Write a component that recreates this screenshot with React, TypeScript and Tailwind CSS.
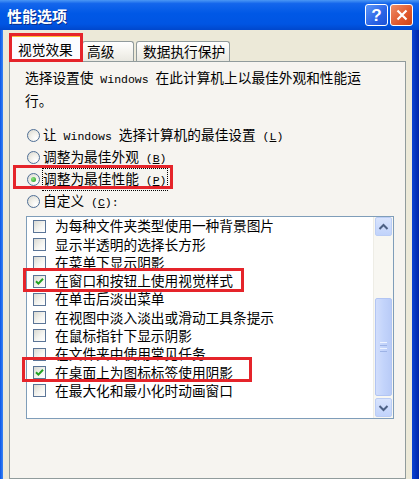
import React from "react";

const W = ({ children }: { children: React.ReactNode }) => (
  <span className="font-['Liberation_Mono',monospace] text-[11.5px]">{children}</span>
);

function Radio({ checked }: { checked?: boolean }) {
  return (
    <span className="w-[13px] h-[13px] rounded-full border border-[#4F6F96] bg-[radial-gradient(circle_at_70%_75%,#ffffff_0%,#f1f0ea_45%,#d6d5cd_100%)] shrink-0 flex items-center justify-center">
      {checked && (
        <span className="w-[5px] h-[5px] rounded-full bg-[radial-gradient(circle_at_35%_35%,#8ee27f,#1e9a1e)]" />
      )}
    </span>
  );
}

function Check({ checked }: { checked?: boolean }) {
  return (
    <span className="w-[13px] h-[13px] border border-[#5B7597] bg-[linear-gradient(135deg,#d9d9d2_0%,#f4f4f0_55%,#ffffff_100%)] shrink-0 flex items-center justify-center">
      {checked && (
        <svg width="9" height="9" viewBox="0 0 9 9">
          <path d="M1 4.2 L3.4 6.6 L8 1.8" stroke="#21A121" strokeWidth="2" fill="none" />
        </svg>
      )}
    </span>
  );
}

const items: { t: string; c?: boolean }[] = [
  { t: "为每种文件夹类型使用一种背景图片" },
  { t: "显示半透明的选择长方形" },
  { t: "在菜单下显示阴影" },
  { t: "在窗口和按钮上使用视觉样式", c: true },
  { t: "在单击后淡出菜单" },
  { t: "在视图中淡入淡出或滑动工具条提示" },
  { t: "在鼠标指针下显示阴影" },
  { t: "在文件夹中使用常见任务" },
  { t: "在桌面上为图标标签使用阴影", c: true },
  { t: "在最大化和最小化时动画窗口" },
];

function ScrollBtn({ up }: { up?: boolean }) {
  return (
    <div className="h-[19px] w-[17px] rounded-[2px] border border-[#BBCDF5] bg-[linear-gradient(to_bottom,#D9E4FD,#C1D3FB)] flex items-center justify-center">
      <svg width="11" height="8" viewBox="0 0 11 8">
        <path d={up ? "M1.5 6 L5.5 2 L9.5 6" : "M1.5 2 L5.5 6 L9.5 2"} stroke="#4D6185" strokeWidth="2" fill="none" />
      </svg>
    </div>
  );
}

export default function App() {
  return (
    <div className="relative w-[419px] h-[479px] overflow-hidden font-['Noto_Sans_CJK_SC',sans-serif] text-black flex flex-col">
      {/* Title bar */}
      <div className="h-[30px] shrink-0 flex items-center justify-between bg-[linear-gradient(to_bottom,#4B97F5_0%,#1466EC_12%,#0058E6_45%,#0055E3_80%,#0047CC_100%)] pl-[7px] pr-[6px]">
        <span className="text-white font-bold text-[15px] leading-none [text-shadow:1px_1px_0_#0A2E8C]">性能选项</span>
        <div className="flex gap-[2px] items-center">
          <div className="w-[23px] h-[22px] rounded-[3px] border border-white bg-[linear-gradient(135deg,#5C96F8,#2A63E6_60%,#1C52D6)] flex items-center justify-center text-white font-bold text-[17px] leading-none font-['Liberation_Sans',sans-serif]">
            ?
          </div>
          <div className="w-[23px] h-[22px] rounded-[3px] border border-white bg-[linear-gradient(135deg,#EE8E6A,#E0582C_60%,#CC4418)] flex items-center justify-center">
            <svg width="12" height="12" viewBox="0 0 12 12">
              <path d="M1.5 1.5 L10.5 10.5 M10.5 1.5 L1.5 10.5" stroke="white" strokeWidth="2.2" />
            </svg>
          </div>
        </div>
      </div>

      {/* Body */}
      <div className="flex-1 flex">
        <div className="w-[3px] bg-[linear-gradient(to_right,#0B56E6,#3A86F5)]" />
        <div className="flex-1 bg-[#ECE9D8] flex flex-col px-[6px]">
          {/* Tabs */}
          <div className="h-[31px] shrink-0 flex items-end pl-[1px] relative z-10">
            <div className="w-[72px] h-[28px] -mb-[1px] bg-[#FCFCFE] border-x border-[#919B9C] rounded-t-[3px] flex flex-col">
              <div className="h-[3px] bg-[linear-gradient(to_bottom,#E68B2C,#FFC73C)] rounded-t-[2px]" />
              <div className="flex-1 flex items-center pl-[7px] text-[13.7px] leading-none pt-[1px]">视觉效果</div>
            </div>
            <div className="w-[52px] h-[20px] border border-b-0 border-[#919B9C] rounded-t-[3px] bg-[linear-gradient(to_bottom,#FFFFFF,#F3F2EC_60%,#E9E8E1)] flex items-center pl-[4px] text-[13.7px] leading-none">
              高级
            </div>
            <div className="w-[94px] h-[20px] ml-[2px] border border-b-0 border-[#919B9C] rounded-t-[3px] bg-[linear-gradient(to_bottom,#FFFFFF,#F3F2EC_60%,#E9E8E1)] flex items-center pl-[6px] text-[13.7px] leading-none">
              数据执行保护
            </div>
          </div>

          {/* Panel */}
          <div className="flex-1 border border-[#919B9C] bg-[#F6F4F0] flex flex-col">
            <div className="pl-[15px] pt-[5px] text-[13.7px] leading-[20px] whitespace-nowrap">
              选择设置使<W> Windows </W>在此计算机上以最佳外观和性能运
              <br />
              行。
            </div>

            <div className="mt-[14px] flex flex-col text-[13.7px] whitespace-nowrap">
              <div className="h-[22px] flex items-center pl-[17px] gap-[3px]">
                <Radio />
                <span className="leading-[18px]">
                  让<W> Windows </W>选择计算机的最佳设置<W> (<u>L</u>)</W>
                </span>
              </div>
              <div className="h-[22px] flex items-center pl-[17px] gap-[3px]">
                <Radio />
                <span className="leading-[18px]">
                  调整为最佳外观<W> (<u>B</u>)</W>
                </span>
              </div>
              <div className="h-[22px] flex items-center pl-[17px] gap-[2px]">
                <Radio checked />
                <span className="leading-[18px] border border-dotted border-black pr-[1px]">
                  调整为最佳性能<W> (<u>P</u>)</W>
                </span>
              </div>
              <div className="h-[22px] flex items-center pl-[17px] gap-[3px]">
                <Radio />
                <span className="leading-[18px]">
                  自定义<W> (<u>C</u>):</W>
                </span>
              </div>
            </div>

            {/* List box */}
            <div className="mt-[4px] ml-[16px] w-[368px] h-[203px] border border-[#7F9DB9] bg-white flex">
              <div className="flex-1 flex flex-col">
                {items.map((it) => (
                  <div key={it.t} className="h-[18.3px] flex items-center pl-[6px] gap-[9px] text-[13.7px] leading-none whitespace-nowrap">
                    <Check checked={it.c} />
                    <span>{it.t}</span>
                  </div>
                ))}
              </div>
              <div className="w-[20px] bg-[#F8F7F2] border-l border-[#EEEDE6] flex flex-col items-center">
                <ScrollBtn up />
                <div className="h-[62px]" />
                <div className="h-[98px] w-[17px] rounded-[2px] border border-[#B2C5F3] bg-[linear-gradient(to_right,#D2DEFC,#C3D4FB_50%,#B9CBF7)] flex flex-col items-center justify-center gap-[2px]">
                  <div className="w-[7px] h-[1px] bg-[#EEF3FF]" />
                  <div className="w-[7px] h-[1px] bg-[#9DB3E6]" />
                  <div className="w-[7px] h-[1px] bg-[#EEF3FF]" />
                  <div className="w-[7px] h-[1px] bg-[#9DB3E6]" />
                </div>
                <div className="h-[2px]" />
                <ScrollBtn />
              </div>
            </div>
          </div>
        </div>
        <div className="w-[7px] bg-[linear-gradient(to_right,#0A44D4,#0026A8)]" />
      </div>

      {/* Red annotation boxes */}
      <div className="absolute left-[9px] top-[33px] w-[74px] h-[29px] border-[3px] border-[#E5242A] z-20" />
      <div className="absolute left-[13px] top-[165px] w-[160px] h-[24px] border-[3px] border-[#E5242A] z-20" />
      <div className="absolute left-[23px] top-[268px] w-[221px] h-[24px] border-[3px] border-[#E5242A] z-20" />
      <div className="absolute left-[22px] top-[357px] w-[230px] h-[25px] border-[3px] border-[#E5242A] z-20" />
    </div>
  );
}
